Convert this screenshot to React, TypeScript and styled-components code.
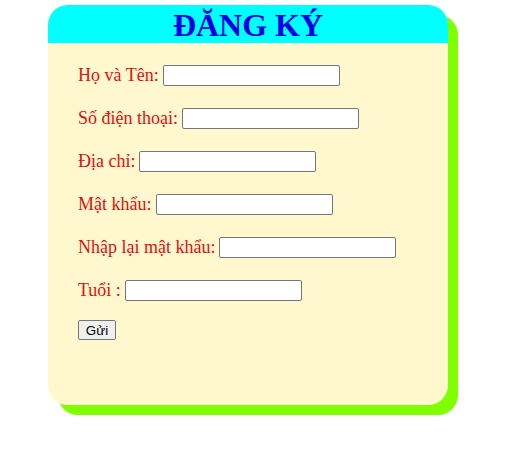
import React from "react";
import styled, { createGlobalStyle } from "styled-components";

const Global = createGlobalStyle`
  html, body { margin: 0; padding: 0; background: #ffffff; }
  body { font-family: "Liberation Serif", "Times New Roman", serif; }
`;

const Page = styled.div`
  padding: 5px 0 40px 48px;
`;

const Card = styled.div`
  width: 400px;
  height: 400px;
  border-radius: 20px;
  background: #fff8cf;
  box-shadow: 10px 10px 0 #7fff00;
  overflow: hidden;
  display: flex;
  flex-direction: column;
`;

const Header = styled.h1`
  margin: 0;
  height: 38px;
  line-height: 40px;
  background: #00ffff;
  color: #0000e6;
  font-family: "Liberation Serif", "Times New Roman", serif;
  font-size: 32px;
  font-weight: bold;
  text-align: center;
`;

const Form = styled.form`
  display: flex;
  flex-direction: column;
  gap: 22px;
  padding: 22px 0 0 30px;
`;

const Row = styled.div`
  display: flex;
  align-items: center;
  height: 21px;
  gap: 4px;
`;

const Label = styled.label`
  color: #e01010;
  font-size: 18px;
  font-family: "Liberation Serif", "Times New Roman", serif;
  white-space: nowrap;
`;

const Input = styled.input`
  box-sizing: border-box;
  width: 177px;
  height: 21px;
  border: 1px solid #767676;
  border-radius: 2px;
  background: #ffffff;
  padding: 1px 2px;
  font-size: 13px;
`;

const Submit = styled.button`
  box-sizing: border-box;
  align-self: flex-start;
  margin-top: -3px;
  width: 38px;
  height: 20px;
  padding: 0;
  border: 1px solid #767676;
  border-radius: 2px;
  background: #efefef;
  color: #000;
  font-family: "Liberation Sans", Arial, sans-serif;
  font-size: 13.33px;
`;

const fields = [
  "Họ và Tên:",
  "Số điện thoại:",
  "Địa chỉ:",
  "Mật khẩu:",
  "Nhập lại mật khẩu:",
  "Tuổi :",
];

export default function App() {
  return (
    <>
      <Global />
      <Page>
        <Card>
          <Header>ĐĂNG KÝ</Header>
          <Form onSubmit={(e) => e.preventDefault()}>
            {fields.map((f) => (
              <Row key={f}>
                <Label>{f}</Label>
                <Input type={f.includes("khẩu") ? "password" : "text"} />
              </Row>
            ))}
            <Submit type="submit">Gửi</Submit>
          </Form>
        </Card>
      </Page>
    </>
  );
}
